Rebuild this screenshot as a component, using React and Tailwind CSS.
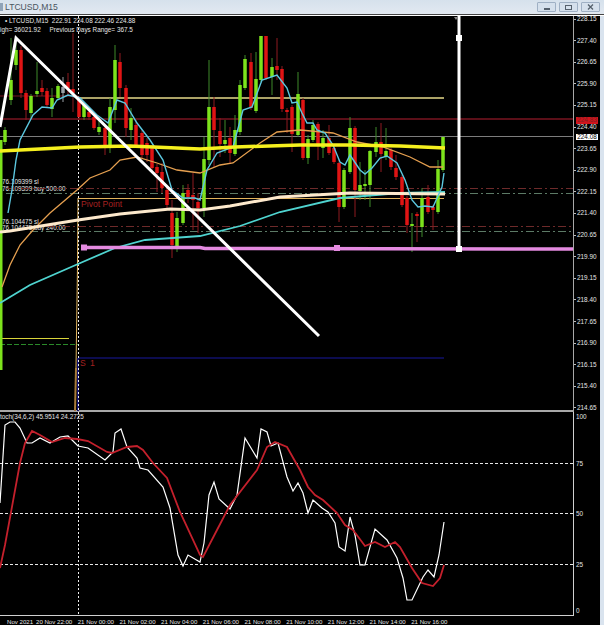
const GREEN = "#7de31c";
const RED = "#e01414";

// [x, wickTop, wickBottom, bodyTop, bodyBottom, colour]
const candles = [
  [5, 127, 145, 130, 142, "g"], [11, 38, 105, 80, 100, "g"], [16, 40, 70, 50, 65, "g"],
  [21, 46, 98, 50, 93, "r"], [26, 90, 120, 93, 110, "r"], [31, 94, 118, 96, 113, "g"],
  [37, 62, 97, 91, 94, "g"], [42, 80, 96, 88, 92, "r"], [47, 88, 108, 91, 105, "r"],
  [52, 88, 117, 98, 109, "g"], [58, 84, 100, 86, 98, "g"], [63, 77, 102, 87, 93, "s"],
  [68, 73, 95, 82, 88, "r"], [73, 33, 112, 89, 93, "r"], [79, 96, 120, 98, 117, "r"],
  [84, 102, 120, 105, 117, "g"], [89, 108, 120, 112, 117, "r"], [94, 114, 130, 117, 128, "r"],
  [99, 117, 135, 127, 132, "g"], [105, 125, 155, 128, 147, "r"], [110, 98, 153, 107, 145, "g"],
  [115, 45, 123, 60, 110, "g"], [120, 53, 97, 62, 88, "r"], [126, 85, 137, 88, 128, "r"],
  [131, 108, 140, 118, 130, "g"], [136, 120, 148, 125, 145, "r"], [142, 130, 158, 133, 155, "r"],
  [147, 138, 162, 143, 155, "r"], [152, 145, 172, 148, 168, "r"], [157, 164, 192, 167, 173, "r"],
  [162, 163, 193, 172, 188, "r"], [167, 187, 210, 190, 205, "r"], [172, 200, 258, 213, 245, "r"],
  [177, 212, 252, 218, 248, "g"], [183, 185, 225, 193, 223, "g"], [188, 184, 203, 190, 197, "r"],
  [193, 173, 230, 195, 200, "r"], [198, 193, 233, 202, 208, "r"], [204, 137, 217, 159, 208, "g"],
  [209, 60, 165, 107, 160, "g"], [214, 97, 167, 107, 130, "r"], [220, 118, 157, 131, 144, "r"],
  [225, 120, 153, 140, 144, "g"], [230, 127, 163, 138, 153, "r"], [235, 115, 156, 130, 154, "g"],
  [240, 80, 135, 85, 132, "g"], [245, 55, 90, 59, 88, "g"], [251, 53, 110, 62, 108, "r"],
  [256, 52, 113, 79, 111, "g"], [261, 36, 82, 36, 80, "g"], [266, 36, 80, 36, 78, "r"],
  [272, 58, 95, 67, 77, "g"], [277, 38, 80, 66, 70, "r"], [282, 66, 112, 69, 109, "r"],
  [287, 108, 133, 110, 112, "r"], [292, 105, 152, 107, 134, "r"], [298, 72, 137, 94, 135, "g"],
  [303, 98, 160, 100, 158, "r"], [308, 135, 164, 139, 158, "g"], [313, 120, 142, 125, 140, "g"],
  [318, 122, 160, 124, 145, "r"], [323, 130, 158, 138, 148, "g"], [329, 125, 155, 138, 153, "r"],
  [334, 145, 164, 148, 162, "r"], [339, 160, 222, 163, 207, "r"], [344, 168, 209, 170, 207, "g"],
  [350, 117, 174, 128, 172, "g"], [355, 126, 217, 128, 190, "r"], [360, 162, 200, 185, 191, "g"],
  [365, 170, 200, 184, 186, "g"], [370, 150, 207, 151, 185, "g"], [376, 127, 157, 142, 152, "g"],
  [381, 123, 172, 142, 154, "r"], [386, 128, 160, 151, 157, "g"], [391, 148, 170, 150, 167, "r"],
  [396, 155, 180, 168, 177, "r"], [402, 175, 207, 177, 205, "r"], [407, 196, 233, 198, 225, "r"],
  [412, 213, 252, 224, 226, "g"], [417, 212, 242, 214, 216, "r"], [422, 188, 237, 198, 227, "g"],
  [428, 185, 214, 197, 212, "r"], [433, 205, 230, 207, 210, "r"], [438, 160, 214, 169, 212, "g"],
  [443, 137, 172, 137, 170, "g"],
];

const fastMa = "8,213 12,190 16,160 20,140 33,115 42,107 52,108 57,100 68,95 80,98 97,115 108,123 117,100 125,103 137,123 150,140 163,160 172,190 183,198 195,198 200,200 207,170 217,153 233,147 243,110 252,107 262,80 277,75 287,88 292,103 297,102 302,113 307,123 313,123 317,130 325,133 333,145 340,162 345,165 350,155 360,170 365,174 372,168 380,158 387,156 397,163 405,180 412,200 418,207 425,206 433,207 442,187 444,173";
const orangeMa = "2,287 10,265 20,245 33,230 50,213 77,190 90,178 110,170 120,160 137,157 157,163 177,170 200,173 220,165 233,163 260,143 277,132 300,130 333,133 357,142 383,147 410,157 430,167 443,167";
const cyanMa = "0,303 30,285 78,264 115,248 145,240 200,236 240,226 280,212 340,198 400,193 445,192";
const creamMa = "0,232 10,231 78,220 120,214 170,209 200,210 230,206 280,197 350,193 445,194";
const yellowMa = "0,151 80,147 130,146 200,149 235,147 300,145 350,145 400,146 445,148";

const stochMain = "0,503 5,425 10,422 15,422 20,428 27,443 32,443 40,438 50,443 60,437 68,436 78,446 88,448 105,460 113,452 115,433 121,429 127,447 137,458 140,468 148,470 163,487 170,508 178,555 183,566 188,555 200,562 204,543 209,495 214,482 219,499 230,509 237,495 245,438 257,458 261,429 267,432 271,446 278,443 287,477 293,491 298,483 303,493 308,513 313,500 322,508 328,512 335,523 339,547 345,551 350,517 355,535 360,565 365,565 375,529 387,540 397,558 403,578 407,600 412,600 423,577 428,570 434,577 439,555 444,522";
const stochSignal = "0,568 5,545 20,463 25,443 32,431 40,435 52,442 65,438 77,439 88,441 107,452 112,453 127,447 137,446 143,450 153,463 167,478 180,512 200,555 203,557 217,530 230,505 257,470 267,447 275,442 287,447 300,470 308,487 315,495 323,500 337,513 345,525 353,530 365,546 375,542 385,547 395,542 400,547 412,568 422,583 433,586 440,578 444,565";

const prices = ["228.15", "227.40", "226.65", "225.90", "225.15", "224.40", "223.65", "222.90", "222.15", "221.40", "220.65", "219.90", "219.15", "218.40", "217.65", "216.90", "216.15", "215.40", "214.65"];
const times = ["20 Nov 22:00", "21 Nov 00:00", "21 Nov 02:00", "21 Nov 04:00", "21 Nov 06:00", "21 Nov 08:00", "21 Nov 10:00", "21 Nov 12:00", "21 Nov 14:00", "21 Nov 16:00"];

function Candle({ c }) {
  const [x, wt, wb, bt, bb, kind] = c;
  const body = kind === "g" ? GREEN : kind === "r" ? RED : "#9aa0a6";
  const wick = kind === "g" ? "#3f8a2a" : kind === "r" ? "#8f1a20" : "#9aa0a6";
  return (
    <g>
      <line x1={x} x2={x} y1={wt} y2={wb} stroke={wick} strokeWidth="1" />
      <rect x={x - 1.75} y={bt} width="3.5" height={bb - bt} fill={body} />
    </g>
  );
}

function Handle({ x, y }) {
  return <rect x={x - 3} y={y - 3} width="6" height="6" fill="#fff" />;
}

function MainChart() {
  return (
    <svg className="relative block w-[573px] h-[395px]" viewBox="0 16 573 395">
      {/* levels behind the candles */}
      <line x1="0" x2="78" y1="96" y2="96" stroke="#7a1420" />
      <line x1="0" x2="573" y1="119" y2="119" stroke="#7a1420" strokeWidth="1.5" />
      <line x1="0" x2="573" y1="136.5" y2="136.5" stroke="#7c7c7c" />
      <line x1="78" x2="444" y1="98" y2="98" stroke="#e6da8a" strokeWidth="1.4" />
      <line x1="6" x2="573" y1="188.5" y2="188.5" stroke="#6e2a2a" strokeDasharray="8 3 2 3" />
      <line x1="6" x2="573" y1="193.5" y2="193.5" stroke="#5c7a66" strokeDasharray="8 3 2 3" />
      <line x1="30" x2="573" y1="226.5" y2="226.5" stroke="#6e2a2a" strokeDasharray="8 3 2 3" />
      <line x1="30" x2="573" y1="231.5" y2="231.5" stroke="#5c7a66" strokeDasharray="8 3 2 3" />
      <line x1="78" x2="444" y1="198.5" y2="198.5" stroke="#e2b45c" />
      <line x1="78" x2="444" y1="358" y2="358" stroke="#10106a" strokeWidth="1.5" />
      <line x1="0" x2="69" y1="338.5" y2="338.5" stroke="#d8d43a" />
      <line x1="0" x2="78" y1="344.5" y2="344.5" stroke="#2a8a2a" strokeDasharray="5 2" />
      <line x1="78" x2="78" y1="358" y2="411" stroke="#10106a" strokeWidth="2" />
      <polyline points="78,198 77.5,265 76,368" fill="none" stroke="#e2b45c" />
      <polyline points="76,368 75,411" fill="none" stroke="#a87a3a" strokeWidth="2" />
      <line x1="78.5" x2="78.5" y1="16" y2="411" stroke="#f0f0f0" strokeDasharray="2 2" />

      {candles.map((c) => (
        <Candle key={c[0]} c={c} />
      ))}
      <rect x="0" y="140" width="2.5" height="230" fill={GREEN} />

      {/* moving averages */}
      <polyline points={orangeMa} fill="none" stroke="#e6a050" strokeWidth="1.3" />
      <polyline points={cyanMa} fill="none" stroke="#4fd4d0" strokeWidth="1.8" />
      <polyline points={creamMa} fill="none" stroke="#fde9cc" strokeWidth="3" />
      <polyline points={fastMa} fill="none" stroke="#5cc8e0" strokeWidth="1.4" />
      <polyline points={yellowMa} fill="none" stroke="#f6f01e" strokeWidth="3.5" />

      {/* drawn objects */}
      <polyline points="81,247.5 200,247.5 205,248.5 573,249" fill="none" stroke="#e48ae0" strokeWidth="3.5" />
      <rect x="81" y="244.5" width="6" height="6" fill="#e48ae0" />
      <rect x="334" y="245" width="6" height="6" fill="#e48ae0" />
      <polyline points="0,127 16,38 319,336" fill="none" stroke="#fff" strokeWidth="3" />
      <line x1="459" x2="459" y1="16" y2="249" stroke="#fff" strokeWidth="3" />
      <Handle x={459} y={38} />
      <Handle x={459} y={249} />
      <polygon points="454,17 458,17 456,20" fill="#888" />
    </svg>
  );
}

function StochChart() {
  return (
    <svg className="relative block w-[573px] h-[203px]" viewBox="0 412 573 203">
      <line x1="0" x2="573" y1="463.5" y2="463.5" stroke="#e8e8e8" strokeDasharray="3 2" />
      <line x1="0" x2="573" y1="513.5" y2="513.5" stroke="#e8e8e8" strokeDasharray="3 2" />
      <line x1="0" x2="573" y1="564.5" y2="564.5" stroke="#e8e8e8" strokeDasharray="3 2" />
      <line x1="78.5" x2="78.5" y1="412" y2="615" stroke="#f0f0f0" strokeDasharray="2 2" />
      <polyline points={stochMain} fill="none" stroke="#fff" strokeWidth="1.2" />
      <polyline points={stochSignal} fill="none" stroke="#c4202c" strokeWidth="1.8" />
    </svg>
  );
}

function WinButton({ children }) {
  return (
    <div className="w-[19px] h-[10px] flex items-center justify-center rounded-[1px] border border-[#9fb0c4] bg-[#d5e0ec]">
      {children}
    </div>
  );
}

export default function App() {
  return (
    <div
      className="w-[604px] h-[625px] overflow-hidden bg-[#d9e3ee] text-[6.4px] leading-[10px] text-[#e6e6e6]"
      style={{ fontFamily: '"Liberation Sans", Arial, sans-serif' }}
    >
      <div className="h-[14px] flex items-center justify-between pr-[4px] bg-gradient-to-b from-[#d6e1ec] to-[#e2e9f1]">
        <div className="flex items-center gap-[2px]">
          <div className="w-[3px] h-[8px] bg-[#8fa3b8]" />
          <span className="text-[8.6px] text-[#4a5560]">LTCUSD,M15</span>
        </div>
        <div className="flex gap-[3px]">
          <WinButton>
            <div className="w-[6px] h-[2px] mt-[3px] bg-[#55606c]" />
          </WinButton>
          <WinButton>
            <div className="w-[7px] h-[5px] border border-[#55606c]" />
          </WinButton>
          <WinButton>
            <svg width="7" height="6" viewBox="0 0 7 6">
              <path d="M1 0.5 L6 5.5 M6 0.5 L1 5.5" stroke="#55606c" strokeWidth="1.3" />
            </svg>
          </WinButton>
        </div>
      </div>
      <div className="h-px bg-[#444]" />
      <div className="h-px bg-white" />

      <div className="w-[600px] h-[609px] bg-black">
        <div className="flex h-[396px]">
          <div className="relative w-[574px] h-[396px] border-r-[1.5px] border-b-2 border-[#a8a8a8]">
            <span className="absolute left-[5px] top-0 whitespace-pre">{"• LTCUSD,M15  222.91 224.08 222.46 224.88"}</span>
            <span className="absolute left-0 top-[9px] whitespace-pre">{"igh= 36021.92     Previous Days Range= 367.5"}</span>
            <span className="absolute left-[2px] top-[161px]">76.109399 sl</span>
            <span className="absolute left-[2px] top-[168px]">76.109399 buy 500.00</span>
            <span className="absolute left-[2px] top-[201px]">76.104475 sl</span>
            <span className="absolute left-[2px] top-[207px]">76.104475 buy 240.00</span>
            <span className="absolute left-[81px] top-[183px] text-[8.6px] text-[#a52020]">Pivot Point</span>
            <span className="absolute left-[80px] top-[342px] text-[8.6px] tracking-[1px] text-[#a52020]">S 1</span>
            <MainChart />
          </div>
          <div className="relative z-10 h-[399px] -mt-[2px] flex flex-col justify-between">
            {prices.map((p) => (
              <div key={p} className="flex items-center gap-[1px] h-[10px]">
                <div className="w-[2px] h-px bg-[#bbb]" />
                <span>{p}</span>
              </div>
            ))}
            <span className="absolute left-[2px] top-[102.5px] w-[22px] h-[7px] flex items-center justify-center bg-[#d0141c] text-[#7c2020]">224.83</span>
            <span className="absolute left-[2px] top-[119.5px] w-[22px] h-[6px] flex items-center justify-center bg-white text-black">224.08</span>
          </div>
        </div>

        <div className="flex h-[204px]">
          <div className="relative w-[574px] h-[204px] border-r-[1.5px] border-b-[1.5px] border-[#d0d0d0]">
            <span className="absolute left-0 top-0">toch(34,6,2) 45.9514 24.2725</span>
            <StochChart />
          </div>
          <div className="pl-[2px]">
            <div className="h-[10px]">100</div>
            <div className="h-[10px] mt-[36.5px]">75</div>
            <div className="h-[10px] mt-[40px]">50</div>
            <div className="h-[10px] mt-[41px]">25</div>
            <div className="h-[10px] mt-[36.5px]">0</div>
          </div>
        </div>

        <div className="flex h-[9px] pt-[1px] text-[6.1px] leading-[10px] whitespace-nowrap">
          <div className="w-[36px] pl-[7px]">Nov 2021</div>
          {times.map((t) => (
            <div key={t} className="w-[41.7px]">
              {t}
            </div>
          ))}
        </div>
      </div>
    </div>
  );
}
